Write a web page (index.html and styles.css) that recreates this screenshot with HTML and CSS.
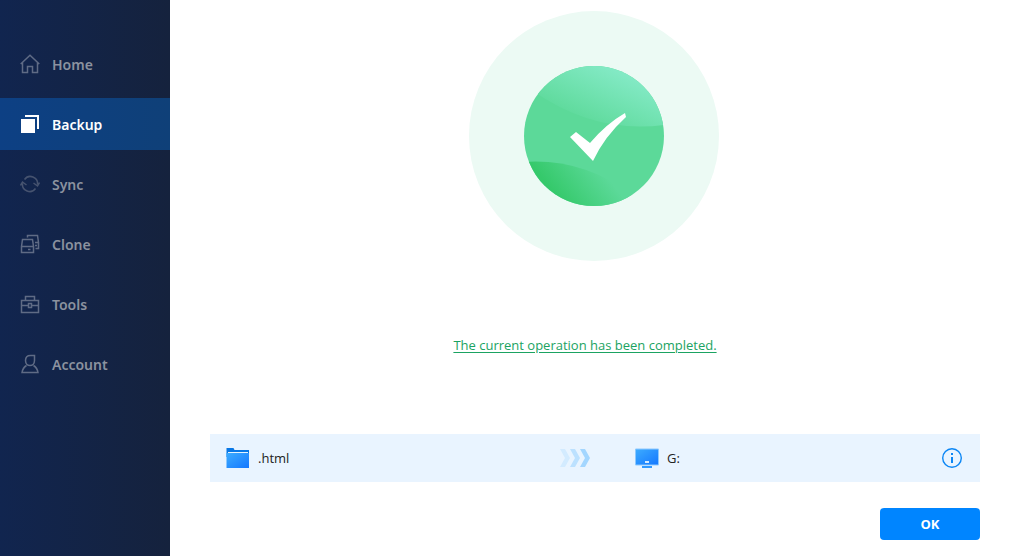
FILE: index.html
```
<!DOCTYPE html>
<html lang="en">
<head>
  <meta charset="UTF-8">
  <meta name="viewport" content="width=device-width, initial-scale=1.0">
  <title>Backup</title>
  <link rel="stylesheet" href="styles.css">
</head>
<body>
  <nav class="sidebar">
    <a href="#home" class="nav-item">
      <svg class="nav-icon" viewBox="0 0 20 20"><path d="M.7 10 10 1.200 19.300 10M2.500 8.500v10h5v-6h5v6h5v-10"/></svg>
      Home
    </a>
    <a href="#backup" class="nav-item active">
      <svg class="nav-icon" viewBox="0 0 20 20"><path class="solid" d="M1 5h14v14H1zM5 1h14v14h-2V3H5z"/></svg>
      Backup
    </a>
    <a href="#sync" class="nav-item">
      <svg class="nav-icon dim" viewBox="0 0 20 20"><path d="M4.500 5.500A7.200 7.200 0 0 1 17.500 10.500M15.500 14.500A7.200 7.200 0 0 1 2.500 9.500M.5 11.500l2-3.500 4 3M13.500 9l4 3 2-3.500"/></svg>
      Sync
    </a>
    <a href="#clone" class="nav-item">
      <svg class="nav-icon" viewBox="0 0 20 20"><path d="M2.500 5.500h10l1 7v6h-12v-6zM1.500 12.500h12M8 15.500h2.500M7.500 3.500v-2h10l1 7v6h-3M15 8.500h3M15 11.500h2"/></svg>
      Clone
    </a>
    <a href="#tools" class="nav-item">
      <svg class="nav-icon" viewBox="0 0 20 20"><path d="M1.500 6.500h17v12h-17zM5.500 6V2.500h9V6M1.500 11.500h7M11.500 11.500h7M8.500 9.500h3v4h-3z"/></svg>
      Tools
    </a>
    <a href="#account" class="nav-item">
      <svg class="nav-icon" viewBox="0 0 20 20"><path d="M14.500 1.500v5c0 3-2 5-4.500 5s-4.500-2-4.500-5 2-5 5-5zM6.500 11.500c-2.500 1.500-4 4-4.500 7h16c-.5-3-2-5.500-4.500-7"/></svg>
      Account
    </a>
  </nav>

  <main class="content">
    <svg class="success" viewBox="0 0 252 250" role="img" aria-label="Completed">
      <defs>
        <linearGradient id="light" x1="0" y1="1" x2="1" y2="0">
          <stop offset="0.2" stop-color="#5cd999"/>
          <stop offset="0.8" stop-color="#84eac6"/>
        </linearGradient>
        <linearGradient id="dark" gradientUnits="userSpaceOnUse" x1="82" y1="178" x2="122" y2="146">
          <stop offset="0" stop-color="#35c96b"/>
          <stop offset="1" stop-color="#5cd999"/>
        </linearGradient>
        <clipPath id="disc"><circle cx="125" cy="125" r="70"/></clipPath>
      </defs>
      <circle cx="125" cy="125" r="125" fill="#ecfaf4"/>
      <g clip-path="url(#disc)">
        <path d="M55 55h140v140H55z" fill="#5cd999"/>
        <path d="M64 80Q126 123 195 114V55H64z" fill="url(#light)"/>
        <path d="M55 151Q114 147 163 184V195H55z" fill="url(#dark)"/>
      </g>
      <path d="M101 126l6-5 14 11Q137 113 156 102l1 4Q135 126 124 150z" fill="#fff"/>
    </svg>

    <a href="#log" class="message">The current operation has been completed.</a>

    <div class="task">
      <div class="place source">
        <svg width="24" height="20" viewBox="0 0 24 20">
          <defs>
            <linearGradient id="blue" x1="0" y1="0" x2="1" y2="1">
              <stop offset="0" stop-color="#3dacff"/>
              <stop offset="1" stop-color="#1477ff"/>
            </linearGradient>
          </defs>
          <path d="M.5 0h7l1 2H23v7H.5z" fill="#0877e6"/>
          <path d="M2 4h20v2H2z" fill="#e4f3ff"/>
          <path d="M.5 5H23v15H.5z" fill="url(#blue)"/>
        </svg>
        .html
      </div>
      <svg class="arrows" width="30" height="18" viewBox="0 0 30 18">
        <path d="M0 0h5l5 9-5 9H0l5-9z" fill="#d3ebff"/>
        <path d="M10 0h5l5 9-5 9h-5l5-9z" fill="#bce1ff"/>
        <path d="M20 0h5l5 9-5 9h-5l5-9z" fill="#a3d6ff"/>
      </svg>
      <div class="place target">
        <svg width="24" height="20" viewBox="0 0 24 20">
          <path d="M.5 1h23v16H.5z" fill="url(#blue)" stroke="#8dc9ff"/>
          <path d="M10 13h4v2h-4z" fill="#d5ebff"/>
          <path d="M7 18h10v2H7z" fill="#3099ff"/>
        </svg>
        G:
      </div>
      <button class="info" aria-label="Details">
        <svg width="20" height="20" viewBox="0 0 20 20">
          <circle cx="10" cy="10" r="9.300" fill="none" stroke="#0b86f5" stroke-width="1.400"/>
          <path d="M9 5h2v2H9zM9 9h2v6H9z" fill="#0b86f5"/>
        </svg>
      </button>
    </div>

    <button class="ok">OK</button>
  </main>
</body>
</html>
```
FILE: styles.css
```
* {
  box-sizing: border-box;
}

body {
  margin: 0;
  min-height: 100vh;
  display: flex;
  background: #fff;
  color: #222;
  font-family: "Segoe UI", "Open Sans", "Noto Sans", sans-serif;
  font-size: 13px;
}

svg {
  display: block;
}

button {
  border: 0;
  padding: 0;
  font: inherit;
  cursor: pointer;
}

/* Sidebar */
.sidebar {
  flex: 0 0 170px;
  display: flex;
  flex-direction: column;
  gap: 8px;
  padding-top: 38px;
  background: linear-gradient(to right, #11254f, #15223d);
}

.nav-item {
  display: flex;
  align-items: center;
  gap: 12px;
  height: 52px;
  padding-left: 20px;
  color: #8b929f;
  font-family: "Segoe UI", "Noto Sans", sans-serif;
  font-size: 14px;
  font-weight: 600;
  text-decoration: none;
}

.nav-item.active {
  background: linear-gradient(to right, #0d4084, #0f4078);
  color: #fff;
}

.nav-icon {
  width: 20px;
  height: 20px;
  fill: none;
  stroke: #5f6b85;
  stroke-width: 1.5;
}

.nav-icon.dim {
  stroke: #46536f;
}

.nav-icon .solid {
  fill: #fff;
  stroke: none;
}

/* Content */
.content {
  flex: 1;
  display: flex;
  flex-direction: column;
  align-items: center;
  padding: 11px 30px 16px 40px;
}

.success {
  width: 252px;
  height: 250px;
}

.message {
  margin: 74px 20px 79px 0;
  color: #1ba362;
  line-height: 20px;
  text-underline-offset: 2px;
}

.task {
  align-self: stretch;
  display: grid;
  grid-template-columns: 350px 75px 1fr 20px;
  align-items: center;
  height: 48px;
  padding-right: 18px;
  background: #e9f4ff;
}

.place {
  display: flex;
  align-items: center;
  gap: 8px;
  font-weight: 500;
}

.source {
  padding-left: 16px;
}

.info {
  background: none;
}

.ok {
  align-self: flex-end;
  width: 100px;
  height: 32px;
  margin-top: 26px;
  border-radius: 4px;
  background: #0085ff;
  color: #fff;
  font-weight: 700;
}
```
